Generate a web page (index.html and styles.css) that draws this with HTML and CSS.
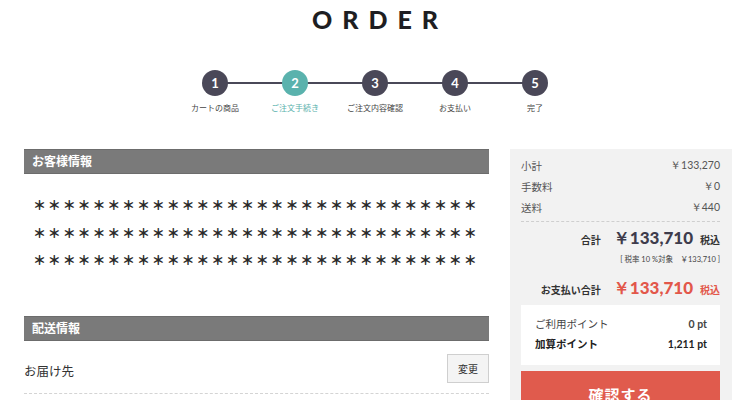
FILE: index.html
```html
<!DOCTYPE html>
<html lang="ja">
<head>
<meta charset="utf-8">
<link rel="stylesheet" href="styles.css">
</head>
<body>
<h1 class="title">ORDER</h1>
<ol class="steps">
  <li class="step"><span class="circle">1</span><span class="label">カートの商品</span></li>
  <li class="step current"><span class="circle">2</span><span class="label">ご注文手続き</span></li>
  <li class="step"><span class="circle">3</span><span class="label">ご注文内容確認</span></li>
  <li class="step"><span class="circle">4</span><span class="label">お支払い</span></li>
  <li class="step last"><span class="circle">5</span><span class="label">完了</span></li>
</ol>
<div class="layout">
  <main class="main">
    <h2 class="sec-head">お客様情報</h2>
    <div class="masked">
      <p>＊＊＊＊＊＊＊＊＊＊＊＊＊＊＊＊＊＊＊＊＊＊＊＊＊＊＊＊＊＊</p>
      <p>＊＊＊＊＊＊＊＊＊＊＊＊＊＊＊＊＊＊＊＊＊＊＊＊＊＊＊＊＊＊</p>
      <p>＊＊＊＊＊＊＊＊＊＊＊＊＊＊＊＊＊＊＊＊＊＊＊＊＊＊＊＊＊＊</p>
    </div>
    <h2 class="sec-head">配送情報</h2>
    <div class="deliv-row">
      <span class="deliv-label">お届け先</span>
      <button class="change-btn">変更</button>
    </div>
  </main>
  <aside class="summary">
    <div class="sub-rows">
      <div class="row"><span>小計</span><span class="num">￥133,270</span></div>
      <div class="row"><span>手数料</span><span class="num">￥0</span></div>
      <div class="row"><span>送料</span><span class="num">￥440</span></div>
    </div>
    <div class="total-row"><span class="t-label">合計</span><span class="t-value">￥133,710</span><span class="t-tax">税込</span></div>
    <div class="tax-note">[ 税率 10 %対象　￥133,710 ]</div>
    <div class="total-row pay"><span class="t-label">お支払い合計</span><span class="t-value">￥133,710</span><span class="t-tax">税込</span></div>
    <div class="points">
      <div class="prow"><span>ご利用ポイント</span><span class="num">0 pt</span></div>
      <div class="prow strong"><span>加算ポイント</span><span class="num">1,211 pt</span></div>
    </div>
    <button class="confirm">確認する</button>
  </aside>
</div>
</body>
</html>
```
FILE: styles.css
```css
* { box-sizing: border-box; }
html, body { margin: 0; padding: 0; }
body {
  width: 750px;
  height: 400px;
  overflow: hidden;
  background: #fff;
  font-family: "Lato", "Noto Sans CJK JP", sans-serif;
  color: #333;
}
.title {
  margin: 0;
  padding-top: 6px;
  height: 34px;
  text-align: center;
  font-family: "Lato", sans-serif;
  font-weight: 900;
  font-size: 25px;
  line-height: 26px;
  letter-spacing: 10px;
  padding-left: 10px;
  color: #1e1e22;
}
.steps {
  list-style: none;
  margin: 36px 0 0 0;
  padding: 0;
  display: flex;
  justify-content: center;
}
.step {
  position: relative;
  width: 80px;
  display: flex;
  flex-direction: column;
  align-items: center;
}
.step::after {
  content: "";
  position: absolute;
  left: 40px;
  width: 80px;
  top: 12px;
  height: 2px;
  background: #4a4858;
}
.step.last::after { display: none; }
.circle {
  position: relative;
  z-index: 1;
  width: 26px;
  height: 26px;
  border-radius: 50%;
  background: #4a4858;
  color: #fff;
  font-family: "Lato", sans-serif;
  font-weight: 700;
  font-size: 13px;
  display: flex;
  align-items: center;
  justify-content: center;
}
.step.current .circle { background: #5ab2ad; }
.label {
  margin-top: 7px;
  font-family: "Noto Sans CJK JP", sans-serif;
  font-size: 8px;
  line-height: 10px;
  color: #444;
  white-space: nowrap;
}
.step.current .label { color: #5ab2ad; }

.layout {
  display: flex;
  gap: 21px;
  padding: 0 18px 0 24px;
  margin-top: 36px;
}
.main { width: 465px; }
.sec-head {
  margin: 0;
  height: 25px;
  background: #7a7a7a;
  border-top: 1px solid #6c6c6c;
  border-bottom: 1px solid #6c6c6c;
  color: #fff;
  font-family: "Noto Sans CJK JP", sans-serif;
  font-weight: 700;
  font-size: 12px;
  line-height: 22px;
  padding-left: 8px;
}
.masked {
  padding: 17px 0 0 9px;
  height: 142px;
}
.masked p {
  margin: 0;
  font-family: "Noto Sans CJK JP", sans-serif;
  font-size: 13px;
  letter-spacing: 1.85px;
  line-height: 27.5px;
  color: #2a2a2a;
  white-space: nowrap;
  font-weight: 900;
}
.deliv-row {
  display: flex;
  align-items: center;
  justify-content: space-between;
  padding: 13px 0 10px;
  border-bottom: 1px dashed #d4d4d4;
}
.deliv-label {
  font-family: "Noto Sans CJK JP", sans-serif;
  font-size: 12.5px;
  color: #333;
  padding-top: 4px;
}
.change-btn {
  width: 42px;
  height: 29px;
  background: #f4f4f4;
  border: 1px solid #cfcfcf;
  font-family: "Noto Sans CJK JP", sans-serif;
  font-size: 10px;
  color: #333;
  padding: 0;
}

.summary {
  width: 222px;
  background: #f2f2f2;
  padding: 6px 12px 0 11px;
  height: 260px;
}
.sub-rows {
  padding-bottom: 3px;
  border-bottom: 1px dashed #cfcfcf;
}
.row, .prow {
  display: flex;
  justify-content: space-between;
  font-family: "Noto Sans CJK JP", sans-serif;
  font-size: 10.5px;
  line-height: 21px;
  color: #555;
}
.num {
  font-family: "Lato", sans-serif;
  font-size: 10.5px;
}
.total-row {
  display: flex;
  justify-content: flex-end;
  align-items: baseline;
  margin-top: 5px;
  line-height: 22px;
}
.t-label {
  font-family: "Noto Sans CJK JP", sans-serif;
  font-weight: 700;
  font-size: 10px;
  color: #333;
  margin-right: 12px;
}
.t-value {
  font-family: "Lato", sans-serif;
  font-weight: 900;
  font-size: 17px;
  color: #3e3c4c;
  margin-right: 7px;
}
.t-tax {
  font-family: "Noto Sans CJK JP", sans-serif;
  font-weight: 700;
  font-size: 10px;
  color: #333;
}
.tax-note {
  text-align: right;
  font-family: "Lato", "Noto Sans CJK JP", sans-serif;
  font-size: 7.5px;
  line-height: 12px;
  color: #444;
  margin-top: 3px;
}
.total-row.pay { margin-top: 11px; }
.total-row.pay .t-value, .total-row.pay .t-tax { color: #e2574a; }
.points {
  margin-top: 4px;
  background: #fff;
  padding: 9px 13px 11px 14px;
}
.prow { line-height: 20px; color: #444; }
.prow.strong { font-weight: 700; color: #222; }
.prow .num { font-weight: 700; }
.confirm {
  display: block;
  width: 100%;
  margin-top: 6px;
  height: 46px;
  border: none;
  background: #e05b4d;
  color: #fff;
  font-family: "Noto Sans CJK JP", sans-serif;
  font-weight: 700;
  font-size: 15px;
  letter-spacing: 1px;
  padding: 0;
}
```
